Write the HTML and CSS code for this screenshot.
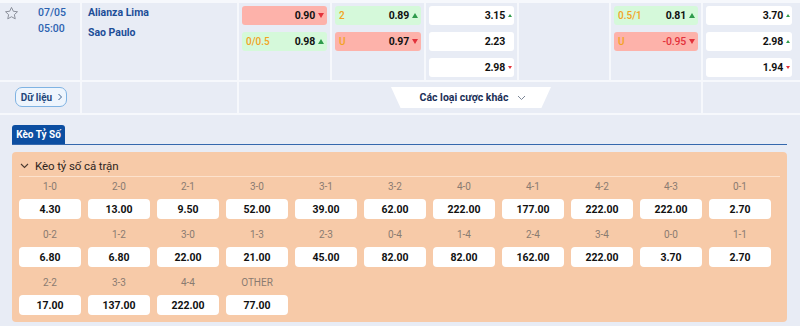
FILE: index.html
```html
<!DOCTYPE html>
<html lang="vi">
<head>
<meta charset="utf-8">
<title>Kèo Tỷ Số</title>
<link rel="stylesheet" href="styles.css">
</head>
<body>
<div class="board">
  <div class="row-main">
    <div class="c-time">
      <svg class="star" width="15" height="15" viewBox="0 0 24 24"><path d="M12 2.2l2.9 6.2 6.7.8-5 4.6 1.4 6.7L12 17.2l-6 3.3 1.4-6.7-5-4.6 6.7-.8z" fill="none" stroke="#868b95" stroke-width="1.5" stroke-linejoin="round"/></svg>
      <div class="date"><span>07/05</span><span>05:00</span></div>
    </div>
    <div class="c-teams"><span>Alianza Lima</span><span>Sao Paulo</span></div>
    <div class="c-odds">
      <div class="cell red"><span class="v">0.90</span><i class="dn"></i></div>
      <div class="cell green"><span class="h">0/0.5</span><span class="v">0.98</span><i class="up"></i></div>
    </div>
    <div class="c-odds">
      <div class="cell green"><span class="h">2</span><span class="v">0.89</span><i class="up"></i></div>
      <div class="cell red"><span class="h">U</span><span class="v">0.97</span><i class="dn"></i></div>
    </div>
    <div class="c-odds">
      <div class="cell white"><span class="v">3.15</span><i class="up-s"></i></div>
      <div class="cell white"><span class="v">2.23</span><i class="none-s"></i></div>
      <div class="cell white"><span class="v">2.98</span><i class="dn-s"></i></div>
    </div>
    <div class="c-odds"></div>
    <div class="c-odds">
      <div class="cell green"><span class="h">0.5/1</span><span class="v">0.81</span><i class="up"></i></div>
      <div class="cell red"><span class="h">U</span><span class="v neg">-0.95</span><i class="dn"></i></div>
    </div>
    <div class="c-odds last">
      <div class="cell white"><span class="v">3.70</span><i class="up-s"></i></div>
      <div class="cell white"><span class="v">2.98</span><i class="up-s"></i></div>
      <div class="cell white"><span class="v">1.94</span><i class="dn-s"></i></div>
    </div>
  </div>
  <div class="row-sub">
    <div class="c-btn">
      <button class="data-btn">Dữ liệu<svg width="6" height="8" viewBox="0 0 6 8"><path d="M1.5 1l3 3-3 3" fill="none" stroke="#3a5f8f" stroke-width="1"/></svg></button>
    </div>
    <div class="c-empty"></div>
    <div class="c-more">
      <div class="more">Các loại cược khác<svg width="9" height="6" viewBox="0 0 9 6"><path d="M1 1l3.5 3.5L8 1" fill="none" stroke="#7d8797" stroke-width="1"/></svg></div>
    </div>
    <div class="c-empty"></div>
  </div>
</div>

<div class="section">
  <div class="tabs"><div class="tab">Kèo Tỷ Số</div></div>
  <div class="panel">
    <div class="panel-head">
      <svg width="9" height="6" viewBox="0 0 9 6"><path d="M1 1l3.5 3.5L8 1" fill="none" stroke="#4a3a30" stroke-width="1.1"/></svg>
      <span>Kèo tỷ số cả trận</span>
    </div>
    <div class="scores">
      <div class="item"><div class="lbl">1-0</div><div class="odd">4.30</div></div>
      <div class="item"><div class="lbl">2-0</div><div class="odd">13.00</div></div>
      <div class="item"><div class="lbl">2-1</div><div class="odd">9.50</div></div>
      <div class="item"><div class="lbl">3-0</div><div class="odd">52.00</div></div>
      <div class="item"><div class="lbl">3-1</div><div class="odd">39.00</div></div>
      <div class="item"><div class="lbl">3-2</div><div class="odd">62.00</div></div>
      <div class="item"><div class="lbl">4-0</div><div class="odd">222.00</div></div>
      <div class="item"><div class="lbl">4-1</div><div class="odd">177.00</div></div>
      <div class="item"><div class="lbl">4-2</div><div class="odd">222.00</div></div>
      <div class="item"><div class="lbl">4-3</div><div class="odd">222.00</div></div>
      <div class="item"><div class="lbl">0-1</div><div class="odd">2.70</div></div>

      <div class="item"><div class="lbl">0-2</div><div class="odd">6.80</div></div>
      <div class="item"><div class="lbl">1-2</div><div class="odd">6.80</div></div>
      <div class="item"><div class="lbl">3-0</div><div class="odd">22.00</div></div>
      <div class="item"><div class="lbl">1-3</div><div class="odd">21.00</div></div>
      <div class="item"><div class="lbl">2-3</div><div class="odd">45.00</div></div>
      <div class="item"><div class="lbl">0-4</div><div class="odd">82.00</div></div>
      <div class="item"><div class="lbl">1-4</div><div class="odd">82.00</div></div>
      <div class="item"><div class="lbl">2-4</div><div class="odd">162.00</div></div>
      <div class="item"><div class="lbl">3-4</div><div class="odd">222.00</div></div>
      <div class="item"><div class="lbl">0-0</div><div class="odd">3.70</div></div>
      <div class="item"><div class="lbl">1-1</div><div class="odd">2.70</div></div>

      <div class="item"><div class="lbl">2-2</div><div class="odd">17.00</div></div>
      <div class="item"><div class="lbl">3-3</div><div class="odd">137.00</div></div>
      <div class="item"><div class="lbl">4-4</div><div class="odd">222.00</div></div>
      <div class="item"><div class="lbl">OTHER</div><div class="odd">77.00</div></div>
    </div>
  </div>
</div>
</body>
</html>
```

FILE: styles.css
```css
* { box-sizing: border-box; }
html, body { margin: 0; padding: 0; }
body {
  width: 800px;
  height: 326px;
  overflow: hidden;
  background: #e8ecf5;
  font-family: Roboto, "Noto Sans", "Liberation Sans", sans-serif;
  color: #111;
}

.board {
  background: #f6f8fc;
  padding: 3px 0 2px;
  display: flex;
  flex-direction: column;
  gap: 2px;
}

.row-main {
  display: grid;
  grid-template-columns: 80px 155px 91px 92px 91px 90px 90px 1fr;
  column-gap: 2px;
  height: 77px;
}
.row-main > div { background: #e8ecf5; }

.c-time {
  display: flex;
  padding: 3px 0 0 4px;
}
.star { flex: none; }
.date {
  display: flex;
  flex-direction: column;
  margin-left: 19px;
  font-size: 10.5px;
  font-weight: 500;
  color: #2d63b1;
  line-height: 16px;
  padding-top: 0;
  margin-top: -1px;
}

.c-teams {
  display: flex;
  flex-direction: column;
  padding: 0 0 0 6px;
  font-size: 10.5px;
  font-weight: 700;
  color: #1d4e98;
  line-height: 20px;
}

.c-odds {
  display: flex;
  flex-direction: column;
  gap: 7px;
  padding: 3px 3px 0 3px;
}
.c-odds.last { padding-right: 8px; }

.cell {
  height: 19px;
  border-radius: 3px;
  display: flex;
  align-items: center;
  justify-content: flex-end;
  padding: 0 3px 0 4px;
  font-size: 10.5px;
}
.cell.red { background: #fdb2aa; }
.cell.green { background: #d5f9da; }
.cell.white { background: #ffffff; padding-right: 2px; }
.cell .h {
  margin-right: auto;
  color: #f2a322;
  font-weight: 500;
  font-size: 10px;
}
.cell .v { font-weight: 700; color: #111; letter-spacing: -0.2px; }
.cell .v.neg { color: #e3323c; font-weight: 500; }

.up, .dn, .up-s, .dn-s, .none-s {
  display: inline-block;
  width: 0;
  height: 0;
  margin-left: 3px;
}
.up {
  border-left: 3px solid transparent;
  border-right: 3px solid transparent;
  border-bottom: 5px solid #2f9b4c;
}
.dn {
  border-left: 3px solid transparent;
  border-right: 3px solid transparent;
  border-top: 5px solid #e2323b;
}
.up-s {
  border-left: 2px solid transparent;
  border-right: 2px solid transparent;
  border-bottom: 3px solid #2f9b4c;
}
.dn-s {
  border-left: 2px solid transparent;
  border-right: 2px solid transparent;
  border-top: 3px solid #e2323b;
}
.none-s { width: 4px; }

.row-sub {
  display: grid;
  grid-template-columns: 80px 155px 1fr 97px;
  column-gap: 2px;
  height: 31px;
}
.row-sub > div { background: #e8ecf5; }

.c-btn { padding: 5px 0 0 15px; }
.data-btn {
  height: 20px;
  width: 52px;
  border: 1px solid #7fb3e3;
  border-radius: 7px;
  background: #eef5fd;
  font-family: Roboto, "Noto Sans", sans-serif;
  font-size: 10px;
  font-weight: 700;
  color: #23467a;
  display: flex;
  align-items: center;
  justify-content: center;
  gap: 5px;
  padding: 0 0 0 2px;
}

.c-more {
  display: flex;
  justify-content: center;
  padding: 5px 0 0 2px;
}
.more {
  width: 160px;
  height: 21px;
  background: #ffffff;
  clip-path: polygon(0 0, 100% 0, 94% 100%, 6% 100%);
  display: flex;
  align-items: center;
  justify-content: center;
  gap: 9px;
  font-size: 10.5px;
  font-weight: 700;
  color: #1b2f57;
  padding-left: 4px;
}

.section { padding: 10px 13px 0 12px; }
.tabs {
  border-bottom: 1px solid #3568ad;
  display: flex;
}
.tab {
  height: 19px;
  width: 53px;
  background: #0c4ea1;
  color: #fff;
  border-radius: 3px 3px 0 0;
  font-size: 10px;
  font-weight: 700;
  display: flex;
  align-items: center;
  justify-content: center;
}

.panel {
  margin-top: 7px;
  background: #f7caa8;
  border-radius: 4px;
  padding: 0 7px 7px;
}
.panel-head {
  height: 25px;
  display: flex;
  align-items: center;
  gap: 6px;
  padding: 3px 0 0 1px;
  border-bottom: 1px solid #fde2cd;
  font-size: 11.5px;
  color: #2e2520;
}
.panel-head span { letter-spacing: -0.1px; }

.scores {
  padding-top: 2px;
  display: grid;
  grid-template-columns: repeat(11, 62px);
  column-gap: 7px;
  row-gap: 8px;
}
.lbl {
  height: 16px;
  line-height: 16px;
  margin-bottom: 4px;
  text-align: center;
  font-size: 10px;
  color: #8a7b71;
}
.odd {
  height: 20px;
  background: #ffffff;
  border-radius: 4px;
  display: flex;
  align-items: center;
  justify-content: center;
  font-size: 10.5px;
  font-weight: 700;
  color: #111;
}
```
